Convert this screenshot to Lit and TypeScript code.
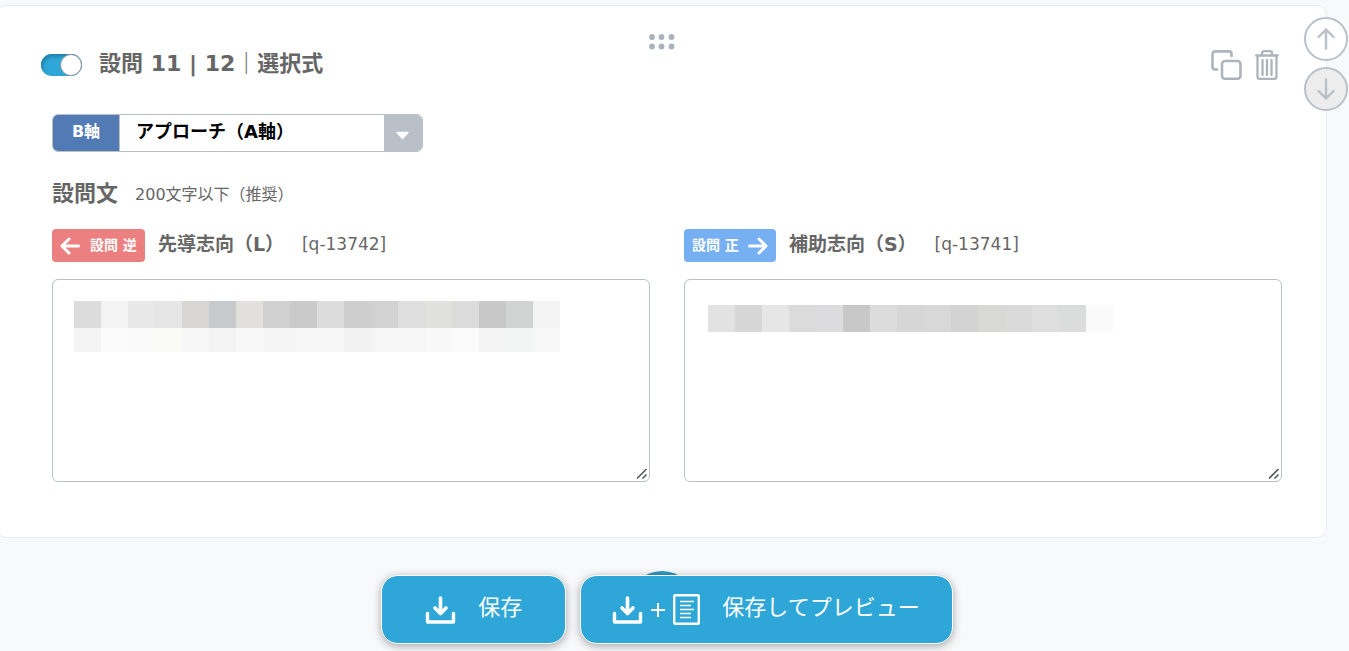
import { LitElement, html, css, svg, nothing } from "lit";
import { customElement, property } from "lit/decorators.js";

const downloadIcon = svg`
  <path d="M15.5 2v15M10 12l5.500 5.500L21 12" fill="none" stroke="currentColor" stroke-width="3.600" stroke-linecap="round" stroke-linejoin="round"/>
  <path d="M2.500 17.500v8.500h26v-8.500" fill="none" stroke="currentColor" stroke-width="3.400" stroke-linecap="round" stroke-linejoin="round"/>`;

@customElement("masked-textarea")
export class MaskedTextarea extends LitElement {
  @property() label = "";
  @property({ type: Number }) inset = 21;
  @property({ type: Number }) offset = 21;
  @property({ attribute: false }) rows: string[][] = [];

  static styles = css`
    :host { display: block; position: relative; }
    textarea {
      display: block; box-sizing: border-box; width: 100%; height: 203px;
      border: 1px solid #b9c0c8; border-radius: 6px; background: #fff;
      padding: 20px; margin: 0; outline: none; resize: both;
      font: 18px/27px "DejaVu Sans", "Noto Sans CJK JP", sans-serif; color: #666;
    }
    textarea::-webkit-resizer { background: transparent; }
    .grip { position: absolute; right: 2px; bottom: 2px; pointer-events: none; }
    .mask { position: absolute; pointer-events: none; }
    .line { display: flex; }
    .cell { width: 27px; height: 27px; }
    .line + .line .cell { height: 24px; }
  `;

  render() {
    return html`
      <textarea aria-label=${this.label}></textarea>
      <svg class="grip" width="12" height="12" viewBox="0 0 12 12" fill="none" stroke="#55585c" stroke-width="1.600" aria-hidden="true">
        <path d="M1 10.500L10.500 1M6.500 10.500L10.500 6.500"/>
      </svg>
      <div class="mask" style="left:${this.inset}px;top:${this.offset}px">
        ${this.rows.map((r) => html`<div class="line">${r.map((c) => html`<span class="cell" style="background:${c}"></span>`)}</div>`)}
      </div>`;
  }
}

@customElement("question-side")
export class QuestionSide extends LitElement {
  @property() kind = "reverse";
  @property() heading = "";
  @property() code = "";
  @property({ type: Number }) inset = 22;
  @property({ type: Number }) offset = 22;
  @property({ attribute: false }) mask: string[][] = [];

  static styles = css`
    :host { display: block; min-width: 0; }
    .head { display: flex; align-items: flex-start; height: 33px; margin-bottom: 17px; }
    .badge {
      display: flex; align-items: center; box-sizing: border-box; height: 33px; padding: 0 8px;
      border-radius: 4px; color: #fff; font-size: 14px; font-weight: 700; line-height: 20px; margin-right: 13px;
      white-space: nowrap;
    }
    .badge.reverse { background: #ec8080; gap: 10px; }
    .badge.forward { background: #76aff2; gap: 9px; }
    .badge svg { display: block; }
    .badge span { padding-bottom: 2px; }
    h3 { margin: 0; font-size: 19px; line-height: 30px; font-weight: 700; white-space: nowrap; }
    .code { font-size: 17px; line-height: 30px; margin-left: 18px; }
  `;

  render() {
    const reverse = this.kind === "reverse";
    const arrow = html`<svg width="20" height="20" viewBox="0 0 20 20" aria-hidden="true">
      <path d=${reverse ? "M9 3L2 10l7 7M2.500 10H18.500" : "M11 3l7 7-7 7M17.500 10H1.500"} fill="none" stroke="#fff"
        stroke-width="3" stroke-linecap="round" stroke-linejoin="round"/></svg>`;
    return html`
      <div class="head">
        <span class="badge ${this.kind}">
          ${reverse ? arrow : nothing}<span>${reverse ? "設問 逆" : "設問 正"}</span>${reverse ? nothing : arrow}
        </span>
        <h3>${this.heading}</h3>
        <span class="code">${this.code}</span>
      </div>
      <masked-textarea label=${this.heading} .inset=${this.inset} .offset=${this.offset} .rows=${this.mask}></masked-textarea>`;
  }
}

@customElement("app-root")
export class AppRoot extends LitElement {
  static styles = css`
    :host {
      display: block; box-sizing: border-box; min-height: 100vh; padding-top: 5px; overflow: hidden;
      background: #f8f9fb; color: #666;
      font-family: "DejaVu Sans", "Noto Sans CJK JP", sans-serif;
    }
    button { font-family: inherit; cursor: pointer; }
    .card {
      position: relative; margin: 0 22px 0 -4px; padding: 28px 44px 55px 55px;
      border: 1px solid #e3ebf4; border-radius: 10px; background: #fff;
    }
    .header {
      display: grid; grid-template-columns: 1fr auto 1fr; min-height: 46px;
      margin-left: -11px; margin-bottom: 34px;
    }
    .title { display: flex; align-items: center; align-self: end; gap: 17px; height: 30px; }
    h2 { margin: 0; font-size: 22px; line-height: 30px; font-weight: 700; white-space: nowrap; }
    .title h2 { padding-bottom: 2px; }
    .toggle {
      appearance: none; position: relative; width: 41px; height: 22px; margin: 0; border-radius: 11px;
      background: #2ea7d8; box-shadow: inset 2px 3px 3px #2485ad; cursor: pointer;
    }
    .toggle::after {
      content: ""; position: absolute; right: 0; top: 0; box-sizing: border-box; width: 22px; height: 22px;
      border: 1px solid #8e959c; border-radius: 50%; background: #fff;
    }
    .drag { align-self: start; padding: 0; border: 0; background: none; height: 16px; }
    .tools { display: flex; justify-content: flex-end; align-self: end; gap: 13px; padding-right: 3px; }
    .tools button { border: 0; padding: 0; background: none; height: 30px; }
    svg { display: block; }
    .order { position: absolute; top: 11px; right: -22px; display: grid; gap: 6px; }
    .order button {
      display: grid; place-items: center; box-sizing: border-box; width: 44px; height: 44px; padding: 0;
      border: 2px solid #b9c0c8; border-radius: 50%; background: #fff;
    }
    .order .down { background: #ededed; }
    .axis {
      display: grid; grid-template-columns: 67px 1fr; box-sizing: border-box; width: 371px; height: 38px;
      border: 1px solid #b9c0c8; border-radius: 6px; overflow: hidden; position: relative; margin-bottom: 26px;
    }
    .axis label {
      background: #527bb5; color: #fff; font-size: 16px; font-weight: 700; line-height: 34px; text-align: center;
      border-right: 1px solid #b9c0c8;
    }
    .axis select {
      appearance: none; border: 0; margin: 0; padding: 0 54px 3px 16px; background: #fff; color: #000; outline: none;
      font: 700 18px/32px "DejaVu Sans", "Noto Sans CJK JP", sans-serif; min-width: 0;
    }
    .caret {
      position: absolute; right: 0; top: 0; width: 38px; height: 36px; background: #b9c0c8; pointer-events: none;
    }
    .section { display: flex; align-items: center; gap: 17px; height: 32px; margin-bottom: 19px; }
    .hint { font-size: 16px; line-height: 30px; padding-top: 2px; }
    .sides { display: grid; grid-template-columns: 1fr 1fr; gap: 34px; }
    .footer {
      position: relative; display: flex; justify-content: center; gap: 14px;
      margin: 37px 15px 0 0;
    }
    .add {
      position: absolute; left: 50%; top: -4px; width: 68px; height: 68px; margin-left: -39px; padding: 0;
      border: 0; border-radius: 50%; background: #2b98c5;
    }
    .save {
      position: relative; display: flex; align-items: center; box-sizing: border-box; height: 69px;
      border: 1px solid #fff; border-radius: 17px; background: #2ea7d8; color: #fff;
      box-shadow: 0 2px 8px #00000059; font-size: 22px; line-height: 32px; padding: 0 43px;
    }
    .save.preview { padding: 0 32px 0 31px; }
    .text { margin-left: 22px; margin-bottom: 4px; white-space: nowrap; }
    .plus { margin: 0 7px; }
  `;

  private leftMask = [
    ["#dcdcdc", "#f3f3f3", "#e8e8e8", "#e6e6e6", "#d8d7d4", "#c8c9cb", "#e1e0dd", "#d1d1d1", "#cacaca", "#dcdcdc", "#cecece", "#d2d2d2", "#dedede", "#e0e0dd", "#dcdcdc", "#c8c8c8", "#d1d3d2", "#f3f3f3"],
    ["#f4f4f4", "#fbfbfb", "#fafafa", "#fafaf7", "#f7f7f7", "#f3f3f3", "#f8f8f8", "#f5f5f5", "#f6f6f6", "#f6f6f6", "#f2f2f2", "#f6f6f6", "#f6f6f6", "#f8f8f8", "#fbfbfb", "#f3f3f3", "#f3f5f4", "#f8f8f8"],
  ];

  private rightMask = [
    ["#e2e2e2", "#d6d6d6", "#e6e6e6", "#dbdbdb", "#dcdcdf", "#c8c8c8", "#dcdcdc", "#d6d6d6", "#d8d8d8", "#d2d2d2", "#d8d8d5", "#dadada", "#dedede", "#dbdddc", "#fafafa"],
  ];

  render() {
    return html`
      <main class="card">
        <header class="header">
          <div class="title">
            <input class="toggle" id="enabled" type="checkbox" role="switch" checked aria-labelledby="title" />
            <h2 id="title">設問 11 | 12｜選択式</h2>
          </div>
          <button class="drag" aria-label="並べ替え">
            <svg width="26" height="16" viewBox="0 0 26 16" fill="#aab2bb">
              ${[3, 12.5, 22.5].map((x) => svg`<circle cx=${x} cy="3" r="2.900"/><circle cx=${x} cy="12.500" r="2.900"/>`)}
            </svg>
          </button>
          <div class="tools">
            <button aria-label="複製">
              <svg width="31" height="30" viewBox="0 0 31 30" fill="none" stroke="#adb4bc" stroke-width="2.600" stroke-linecap="round" stroke-linejoin="round">
                <path d="M6 19.500H4a2.500 2.500 0 0 1-2.500-2.500V3.900A2.500 2.500 0 0 1 4 1.400h14a2.500 2.500 0 0 1 2.500 2.500V6"/>
                <rect x="11" y="11" width="18.500" height="17.700" rx="3"/>
              </svg>
            </button>
            <button aria-label="削除">
              <svg width="24" height="30" viewBox="0 0 24 30" fill="none" stroke="#adb4bc" stroke-width="2.300" stroke-linecap="round" stroke-linejoin="round">
                <path d="M1.200 5.500h21.600M7 5V3.200a2 2 0 0 1 2-2h6a2 2 0 0 1 2 2V5M2.500 6v20.800a2 2 0 0 0 2 2h15a2 2 0 0 0 2-2V6M7.500 10v15M12 10v15M16.500 10v15"/>
              </svg>
            </button>
          </div>
        </header>

        <div class="order">
          <button class="up" aria-label="上へ移動">
            <svg width="18" height="22" viewBox="0 0 18 22" fill="none" stroke="#b9c0c8" stroke-width="2.400" stroke-linecap="round" stroke-linejoin="round"><path d="M9 20.500V1.500M1.500 9L9 1.500 16.500 9"/></svg>
          </button>
          <button class="down" aria-label="下へ移動">
            <svg width="18" height="22" viewBox="0 0 18 22" fill="none" stroke="#b9c0c8" stroke-width="2.400" stroke-linecap="round" stroke-linejoin="round"><path d="M9 1.500v19M1.500 13L9 20.500l7.500-7.500"/></svg>
          </button>
        </div>

        <div class="axis">
          <label for="axis">B軸</label>
          <select id="axis"><option>アプローチ（A軸）</option></select>
          <svg class="caret" viewBox="0 0 38 36" aria-hidden="true"><path d="M13 17.500h11l-5.500 6z" fill="#fff" stroke="#fff" stroke-width="1.500" stroke-linejoin="round"/></svg>
        </div>

        <div class="section">
          <h2>設問文</h2>
          <span class="hint">200文字以下（推奨）</span>
        </div>

        <div class="sides">
          <question-side kind="reverse" heading="先導志向（L）" code="[q-13742]" .mask=${this.leftMask}></question-side>
          <question-side kind="forward" heading="補助志向（S）" code="[q-13741]" .inset=${24} .offset=${26} .mask=${this.rightMask}></question-side>
        </div>
      </main>

      <footer class="footer">
        <button class="add" aria-label="設問を追加"></button>
        <button class="save">
          <svg width="31" height="28" viewBox="0 0 31 28" aria-hidden="true">${downloadIcon}</svg>
          <span class="text">保存</span>
        </button>
        <button class="save preview">
          <svg width="31" height="28" viewBox="0 0 31 28" aria-hidden="true">${downloadIcon}</svg>
          <svg class="plus" width="16" height="16" viewBox="0 0 16 16" aria-hidden="true"><path d="M8 1v14M1 8h14" stroke="#fff" stroke-width="2"/></svg>
          <svg width="27" height="31" viewBox="0 0 27 31" fill="none" stroke="#fff" aria-hidden="true">
            <rect x="1.200" y="1.200" width="24.600" height="28.600" rx="1" stroke-width="2.400"/>
            <path d="M7 7.500h14M7 11.500h11M7 15.500h14M7 19.500h11M7 23.500h11" stroke-width="1.500"/>
          </svg>
          <span class="text">保存してプレビュー</span>
        </button>
      </footer>`;
  }
}
